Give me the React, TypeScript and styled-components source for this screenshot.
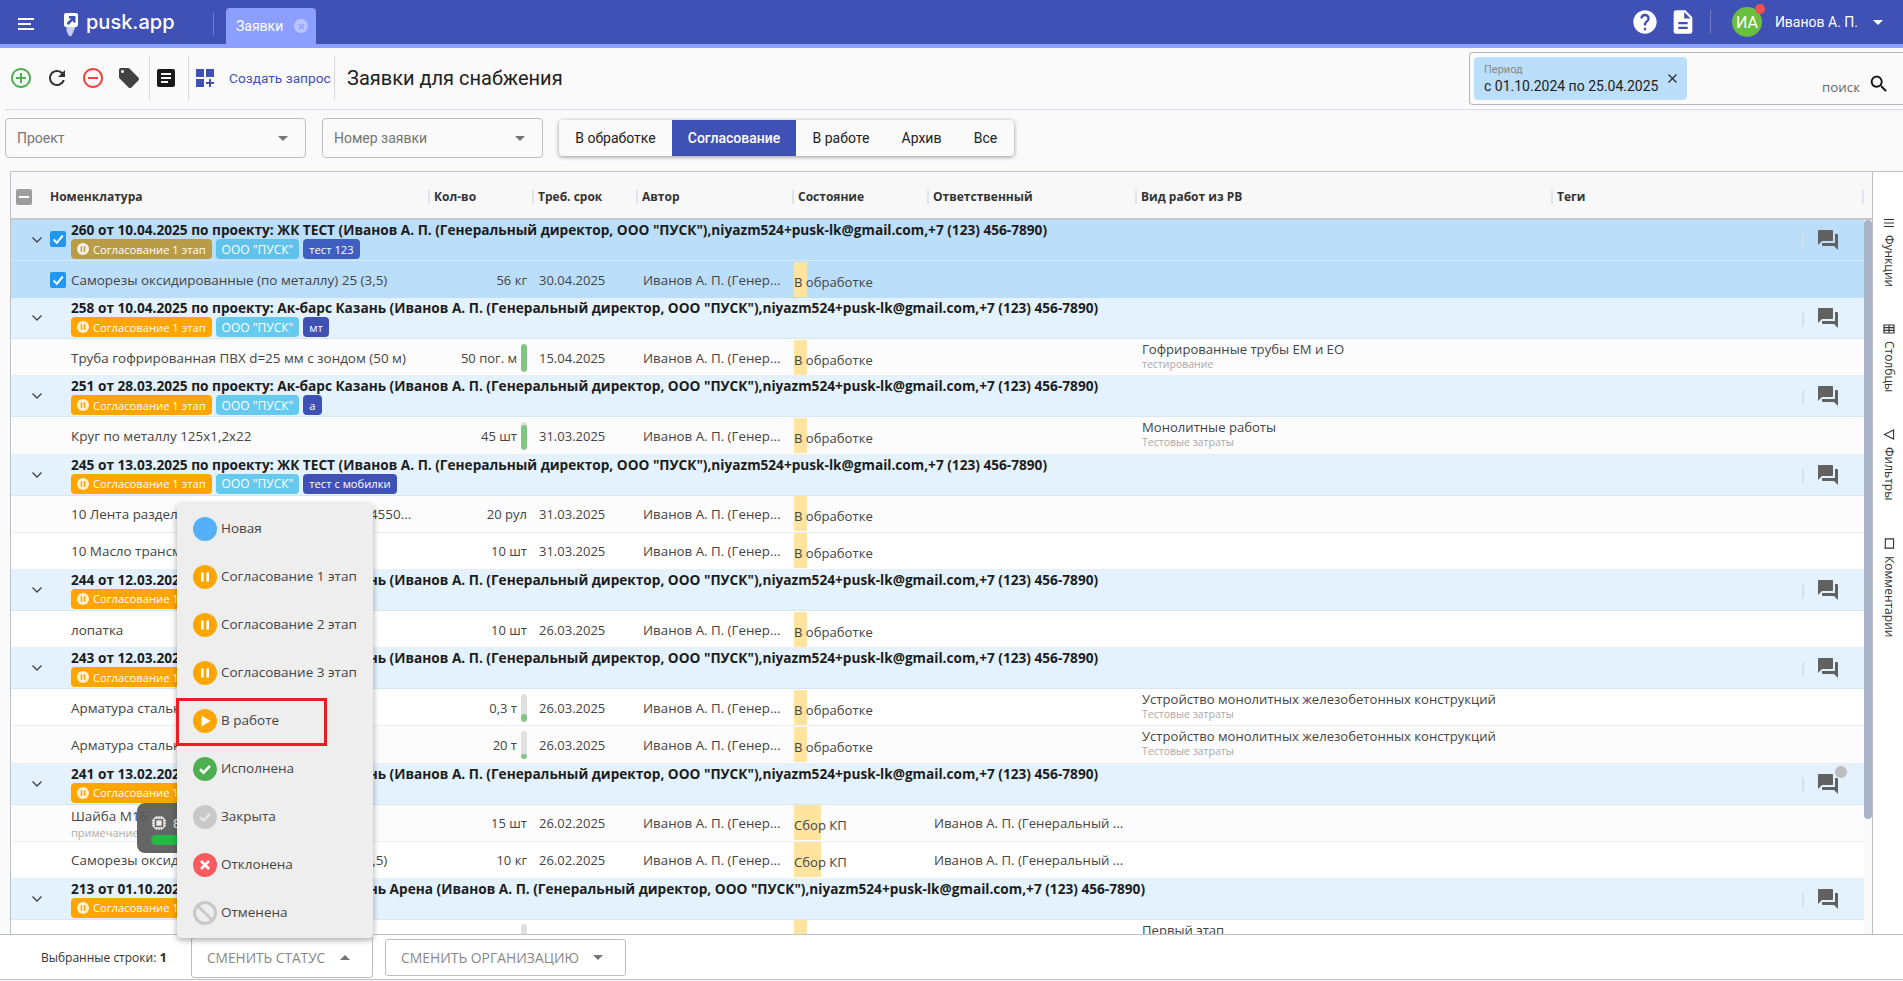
import React from 'react';
import styled, { createGlobalStyle } from 'styled-components';

const GlobalStyle = createGlobalStyle`
   html, body { margin: 0; padding: 0; background: #fafafa; }
   body { font-family: Roboto, 'Liberation Sans', sans-serif; color: #212121; }
   * { box-sizing: border-box; }
`;

const tableFont = `'Open Sans', 'Noto Sans', sans-serif`;

const Page = styled.div`
   position: relative;
   width: 1903px;
   height: 981px;
   overflow: hidden;
   display: flex;
   flex-direction: column;
`;

/* top bar */
const TopBar = styled.header`
   height: 48px;
   flex: none;
   display: flex;
   align-items: flex-start;
   background: #3f51b5;
   border-bottom: 4px solid #8c9eff;
   color: #fff;
`;
const Burger = styled.div`
   width: 16px;
   margin: 18px 30px 0 18px;
   display: flex;
   flex-direction: column;
   gap: 3px;
`;
const BurgerLine = styled.span<{ $short?: boolean }>`
   height: 2px;
   width: ${(p) => (p.$short ? 13 : 16)}px;
   background: #fff;
`;
const Logo = styled.div`
   display: flex;
   align-items: flex-start;
   gap: 8px;
   width: 149px;
   height: 44px;
   padding-top: 13px;
`;
const LogoMark = styled.svg`
   display: block;
   flex: none;
   width: 14px;
   height: 24px;
`;
const LogoText = styled.span`
   margin-top: -1px;
   font-family: Inter, 'Open Sans', sans-serif;
   font-size: 20px;
   font-weight: 500;
   line-height: 20px;
`;
const TopDivider = styled.div`
   width: 1px;
   height: 24px;
   margin-top: 12px;
   background: rgba(255, 255, 255, 0.25);
`;
const UserDivider = styled(TopDivider)`
   margin: 0 0 0 13px;
`;
const Tab = styled.div`
   width: 90px;
   height: 36px;
   margin: 8px 0 0 12px;
   padding-left: 10px;
   display: flex;
   align-items: center;
   gap: 11px;
   background: #8c9eff;
   border-radius: 4px 4px 0 0;
   font-size: 14px;
`;
const TabClose = styled.span`
   width: 14px;
   height: 14px;
   border-radius: 50%;
   background: rgba(255, 255, 255, 0.4);
   display: flex;
   align-items: center;
   justify-content: center;
`;
const TopRight = styled.div`
   margin-left: auto;
   height: 44px;
   display: flex;
   align-items: center;
   padding-right: 20px;
`;
const TopIcon = styled.svg<{ $mr?: number }>`
   display: block;
   width: 28px;
   height: 28px;
   fill: #fff;
   margin-right: ${(p) => p.$mr ?? 0}px;
`;
const Avatar = styled.div`
   position: relative;
   width: 30px;
   height: 30px;
   margin: 0 13px 0 21px;
   border-radius: 50%;
   background: #6abf3f;
   display: flex;
   align-items: center;
   justify-content: center;
   font-size: 16px;
`;
const AvatarDot = styled.span`
   position: absolute;
   right: -3px;
   top: -3px;
   width: 10px;
   height: 10px;
   border-radius: 50%;
   background: #ef5350;
`;
const UserName = styled.span`
   font-size: 14px;
   margin-right: 15px;
`;
const Caret = styled.span<{ $up?: boolean; $color?: string }>`
   width: 0;
   height: 0;
   border-left: 5px solid transparent;
   border-right: 5px solid transparent;
   ${(p) => (p.$up ? 'border-bottom' : 'border-top')}: 5px solid ${(p) => p.$color ?? '#fff'};
`;

/* toolbar */
const Toolbar = styled.div`
   height: 62px;
   flex: none;
   margin-left: 5px;
   padding-bottom: 1px;
   display: flex;
   align-items: center;
   border-bottom: 1px solid #d9dce3;
`;
const ToolIcon = styled.svg<{ $color: string; $ml?: number; $mr?: number; $size?: number }>`
   display: block;
   width: ${(p) => p.$size ?? 24}px;
   height: ${(p) => p.$size ?? 24}px;
   flex: none;
   fill: ${(p) => p.$color};
   margin-left: ${(p) => p.$ml ?? 0}px;
   margin-right: ${(p) => p.$mr ?? 12}px;
`;
const ToolDivider = styled.div`
   width: 1px;
   height: 44px;
   flex: none;
   background: #d8d8d8;
`;
const CreateLink = styled.span`
   margin-left: 15px;
   margin-right: 4px;
   width: 101px;
   font-size: 13.7px;
   color: #3f51b5;
   white-space: nowrap;
`;
const PageTitle = styled.h1`
   margin: 0 0 0 12px;
   font-size: 20px;
   font-weight: 400;
   color: #212121;
   white-space: nowrap;
`;
const SearchBox = styled.div`
   margin-left: auto;
   margin-top: 4px;
   align-self: flex-start;
   width: 434px;
   height: 53px;
   padding: 4px 13px 0 4px;
   display: flex;
   align-items: flex-start;
   border: 1px solid #b5b5b5;
   border-right: 0;
   border-radius: 4px 0 0 4px;
`;
const PeriodChip = styled.div`
   position: relative;
   width: 213px;
   height: 43px;
   padding: 6px 0 0 10px;
   background: #bbdefb;
   border-radius: 4px;
`;
const ChipLabel = styled.div`
   font-size: 11px;
   line-height: 14px;
   color: #888;
`;
const ChipValue = styled.div`
   font-size: 14px;
   line-height: 18px;
   color: #212121;
`;
const ChipClose = styled.svg`
   position: absolute;
   right: 9px;
   top: 16px;
   width: 11px;
   height: 11px;
   stroke: #333;
   stroke-width: 1.4;
`;
const SearchLabel = styled.span`
   margin: 21px 8px 0 auto;
   font-family: ${tableFont};
   font-size: 13.3px;
   color: #666;
`;
const SearchIcon = styled.svg`
   display: block;
   margin-top: 16px;
   width: 22px;
   height: 22px;
   fill: #111;
`;

/* filters */
const FilterBar = styled.div`
   height: 61px;
   flex: none;
   padding: 8px 0 0 5px;
   display: flex;
   align-items: flex-start;
`;
const SelectBox = styled.div<{ $w: number }>`
   width: ${(p) => p.$w}px;
   height: 40px;
   margin-right: 16px;
   padding: 0 17px 0 11px;
   display: flex;
   align-items: center;
   justify-content: space-between;
   border: 1px solid #bdbdbd;
   border-radius: 4px;
   font-size: 14px;
   color: #757575;
`;
const StatusTabs = styled.div`
   margin-top: 2px;
   height: 36px;
   display: flex;
   background: #fafafa;
   border-radius: 4px;
   overflow: hidden;
   box-shadow: 0 1px 4px rgba(0, 0, 0, 0.4);
`;
const StatusTab = styled.div<{ $active?: boolean; $w: number }>`
   width: ${(p) => p.$w}px;
   display: flex;
   align-items: center;
   justify-content: center;
   font-size: 14px;
   font-weight: ${(p) => (p.$active ? 500 : 400)};
   color: ${(p) => (p.$active ? '#fff' : '#212121')};
   background: ${(p) => (p.$active ? '#3f51b5' : 'transparent')};
`;

/* table */
const Frame = styled.div`
   position: relative;
   flex: 1;
   min-height: 0;
   margin-left: 10px;
   display: flex;
   border-top: 1px solid #bdbfc9;
   border-left: 1px solid #bdbfc9;
`;
const GridArea = styled.div`
   width: 1862px;
   flex: none;
   display: flex;
   flex-direction: column;
   min-height: 0;
   border-right: 1px solid #bdbfc9;
`;
const HeadRow = styled.div`
   height: 48px;
   flex: none;
   padding-top: 3px;
   display: flex;
   align-items: center;
   background: #f8f8f8;
   border-bottom: 2px solid #c4c8d2;
`;
const HeadCell = styled.div<{ $w: number }>`
   width: ${(p) => p.$w}px;
   flex: none;
   height: 14px;
   display: flex;
   align-items: center;
   padding-left: 4px;
   font-family: ${tableFont};
   font-size: 12px;
   font-weight: 700;
   color: #333;
   white-space: nowrap;
   border-left: 2px solid #e0e4ec;
`;
const HeadCheckWrap = styled.div`
   width: 417px;
   flex: none;
   display: flex;
   align-items: center;
   gap: 18px;
   padding-left: 5px;
   font-family: ${tableFont};
   font-size: 12px;
   font-weight: 700;
   color: #333;
`;
const HeadCheck = styled.span`
   width: 16px;
   height: 16px;
   display: flex;
   align-items: center;
   justify-content: center;
   background: #9e9e9e;
   border-radius: 2px;
   &::after {
      content: '';
      width: 10px;
      height: 2px;
      background: #fff;
   }
`;
const BodyWrap = styled.div`
   flex: 1;
   min-height: 0;
   display: flex;
   overflow: hidden;
`;
const Rows = styled.div`
   width: 1853px;
   flex: none;
`;
const ScrollTrack = styled.div`
   width: 9px;
   flex: none;
`;
const ScrollThumb = styled.div`
   width: 8px;
   height: 599px;
   background: #a9b4c8;
   border-radius: 4px;
`;
const GroupRowBox = styled.div<{ $sel?: boolean }>`
   height: 41px;
   display: flex;
   background: ${(p) => (p.$sel ? '#bbdefb' : '#e3f2fd')};
   border-bottom: 1px solid ${(p) => (p.$sel ? '#d3e8fa' : '#d7e6f3')};
`;
const Lead = styled.div`
   width: 60px;
   flex: none;
   display: flex;
   align-items: center;
   padding-left: 14px;
`;
const Chevron = styled.svg`
   display: block;
   width: 24px;
   height: 24px;
   flex: none;
   fill: none;
   stroke: #444;
   stroke-width: 1.4;
`;
const CheckBox = styled.span<{ $group?: boolean }>`
   width: 16px;
   height: 16px;
   flex: none;
   display: flex;
   align-items: center;
   justify-content: center;
   background: #2196f3;
   border-radius: 2px;
   margin: ${(p) => (p.$group ? '-2px 0 0 1px' : '0')};
`;
const GroupBody = styled.div`
   flex: 1;
   padding-top: 1px;
   min-width: 0;
`;
const GroupTitle = styled.div`
   height: 18px;
   line-height: 18px;
   font-family: ${tableFont};
   font-size: 13.65px;
   font-weight: 700;
   color: #1c1c1c;
   white-space: nowrap;
`;
const TagRow = styled.div`
   display: flex;
   gap: 4px;
`;
const Tag = styled.span<{ $bg: string; $fs: number }>`
   height: 20px;
   padding: 0 6px;
   display: inline-flex;
   align-items: center;
   gap: 4px;
   background: ${(p) => p.$bg};
   border-radius: 4px;
   font-family: ${tableFont};
   font-size: ${(p) => p.$fs}px;
   color: #fff;
   white-space: nowrap;
`;
const TagDot = styled.span<{ $color: string }>`
   color: ${(p) => p.$color};
`;
const CommentSide = styled.div`
   width: 62px;
   flex: none;
   padding-top: 14px;
   display: flex;
   align-items: flex-start;
   gap: 12px;
`;
const CommentSep = styled.span`
   width: 2px;
   height: 14px;
   background: #d9dfe6;
`;
const CommentIcon = styled.div`
   position: relative;
   margin-top: -6px;
   width: 24px;
   height: 24px;
`;
const CommentBadge = styled.span`
   position: absolute;
   right: -7px;
   top: -6px;
   width: 12px;
   height: 12px;
   border-radius: 50%;
   background: #bdbdbd;
`;
const Row = styled.div<{ $sel?: boolean; $alt?: boolean }>`
   height: 37.2px;
   padding-top: 1px;
   display: flex;
   align-items: center;
   font-family: ${tableFont};
   font-size: 13px;
   color: #444;
   background: ${(p) => (p.$sel ? '#bbdefb' : p.$alt ? '#fcfcfc' : '#fff')};
   border-bottom: 1px solid ${(p) => (p.$sel ? '#bbdefb' : '#eceef4')};
`;
const NameCell = styled.div`
   width: 417px;
   flex: none;
   display: flex;
   align-items: center;
   min-width: 0;
`;
const NameLead = styled.div`
   width: 60px;
   flex: none;
   padding-left: 39px;
`;
const NameText = styled.div`
   min-width: 0;
   font-size: 13.45px;
   white-space: nowrap;
`;
const NameNote = styled.div`
   margin-top: 2px;
   font-size: 11px;
   line-height: 12px;
   color: #aaa;
`;
const QtyCell = styled.div`
   width: 104px;
   flex: none;
   display: flex;
   align-items: center;
   justify-content: flex-end;
   gap: 4px;
   padding-right: 5px;
   white-space: nowrap;
`;
const Bar = styled.span`
   width: 6px;
   height: 28px;
   display: flex;
   align-items: flex-end;
   background: #e0e0e0;
   border-radius: 3px;
   overflow: hidden;
`;
const BarFill = styled.span<{ $h: number }>`
   display: block;
   width: 100%;
   height: ${(p) => p.$h}px;
   background: #81c784;
   border-radius: 3px;
`;
const TextCell = styled.div<{ $w: number; $fs?: number }>`
   width: ${(p) => p.$w}px;
   flex: none;
   padding-left: 7px;
   font-size: ${(p) => p.$fs ?? 13}px;
   white-space: nowrap;
`;
const StateCell = styled.div<{ $strip: number }>`
   width: 133px;
   flex: none;
   margin: -1px 0 0 2px;
   height: 35px;
   padding-top: 11px;
   font-size: 13.1px;
   line-height: 18px;
   color: #444;
   white-space: nowrap;
   background: linear-gradient(#ffe4a0, #ffe4a0) no-repeat left top / ${(p) => p.$strip}px 100%;
`;
const WorkCell = styled.div`
   flex: 1;
   padding: 0 0 0 7px;
   min-width: 0;
   font-size: 13.1px;
   line-height: 15px;
   margin-top: -2px;
`;
const WorkNote = styled.div`
   font-size: 10.5px;
   line-height: 14px;
   color: #aaa;
`;

/* side panel */
const SideBar = styled.div`
   flex: 1;
   background: #fff;
   padding: 46px 0 0 9px;
   display: flex;
   flex-direction: column;
   align-items: flex-start;
   gap: 37px;
`;
const SideTab = styled.div`
   writing-mode: vertical-rl;
   display: flex;
   align-items: center;
   gap: 7px;
   font-family: ${tableFont};
   font-size: 12px;
   line-height: 14px;
   color: #333;
   white-space: nowrap;
`;
const SideIcon = styled.svg<{ $h?: number }>`
   display: block;
   width: 12px;
   height: ${(p) => p.$h ?? 10}px;
   fill: none;
   stroke: #333;
   stroke-width: 1.2;
`;

/* floating perf widget */
const PerfWidget = styled.div`
   position: absolute;
   left: 126px;
   top: 631px;
   width: 100px;
   height: 50px;
   padding: 11px 0 0 14px;
   border-radius: 8px;
   background: rgba(88, 88, 88, 0.92);
   color: #eee;
   font-size: 13px;
`;
const PerfTop = styled.div`
   display: flex;
   align-items: center;
   gap: 6px;
   height: 18px;
`;
const PerfBar = styled.div`
   width: 70px;
   height: 10px;
   margin-top: 3px;
   border-radius: 5px;
   background: #22bb44;
`;

/* bottom bar */
const BottomBar = styled.div`
   height: 46px;
   flex: none;
   margin-bottom: 1px;
   padding-left: 41px;
   display: flex;
   align-items: center;
   background: #fff;
   border-top: 1px solid #bdbfc9;
   border-bottom: 1px solid #bdbfc9;
   font-family: ${tableFont};
   font-size: 12px;
   color: #333;
   position: relative;
   z-index: 3;
`;
const Selected = styled.span`
   width: 150px;
   flex: none;
   b { font-size: 13px; }
`;
const ActionWrap = styled.div`
   position: relative;
   margin-right: 12px;
`;
const ActionButton = styled.div<{ $w: number; $h: number; $fs: number }>`
   width: ${(p) => p.$w}px;
   height: ${(p) => p.$h}px;
   padding: 0 22px 0 15px;
   display: flex;
   align-items: center;
   justify-content: space-between;
   border: 1px solid #bdbdbd;
   border-radius: 3px;
   background: #fff;
   font-family: ${tableFont};
   font-size: ${(p) => p.$fs}px;
   color: #888;
   white-space: nowrap;
`;
const Menu = styled.div`
   position: absolute;
   left: -14px;
   bottom: calc(100% - 1px);
   width: 196px;
   padding: 1px 0;
   background: #eee;
   border-radius: 4px;
   box-shadow: 0 2px 6px rgba(0, 0, 0, 0.35);
`;
const MenuItem = styled.div<{ $marked?: boolean }>`
   position: relative;
   height: 48px;
   padding-left: 16px;
   display: flex;
   align-items: center;
   gap: 4px;
   font-family: ${tableFont};
   font-size: 13.5px;
   color: #444;
   ${(p) =>
      p.$marked &&
      `&::after {
         content: '';
         box-sizing: border-box;
         position: absolute;
         left: -1px;
         top: 1px;
         width: 151px;
         height: 48px;
         border: 3px solid #ed1c24;
      }`}
`;
const MenuLabel = styled.span`
   width: 137px;
   margin-top: -2px;
   overflow: hidden;
   white-space: nowrap;
`;

const Svg = styled.svg<{ $size: number }>`
   display: block;
   flex: none;
   width: ${(p) => p.$size}px;
   height: ${(p) => p.$size}px;
`;

const ArrowDown = () => <Caret $color="#757575" />;

const PauseDot = () => (
   <Svg $size={12} viewBox="0 0 12 12">
      <circle cx="6" cy="6" r="6" fill="#fff" fillOpacity="0.85" />
      <rect x="3.7" y="3.2" width="1.5" height="5.6" fill="currentColor" />
      <rect x="6.8" y="3.2" width="1.5" height="5.6" fill="currentColor" />
   </Svg>
);

const Check = () => (
   <svg width="14" height="14" viewBox="0 0 14 14" fill="none" stroke="#fff" strokeWidth="2">
      <path d="M2.5 7.5 5.8 10.8 11.8 3.5" />
   </svg>
);

const Forum = ({ badge }: { badge?: boolean }) => (
   <CommentIcon>
      <Svg $size={24} viewBox="0 0 24 24" fill="#616161">
         <path d="M21 6h-2v9H6v2c0 .55.45 1 1 1h11l4 4V7c0-.55-.45-1-1-1zm-4 6V3c0-.55-.45-1-1-1H3c-.55 0-1 .45-1 1v14l4-4h10c.55 0 1-.45 1-1z" />
      </Svg>
      {badge && <CommentBadge />}
   </CommentIcon>
);

type TagData = { text: string; color: string; fs?: number };
type GroupData = {
   title: string;
   tags: TagData[];
   selected?: boolean;
   badge?: boolean;
};

const ORANGE = '#ffa500';
const SKY = '#66c9ee';
const INDIGO = '#3f51b5';

const contact =
   ' (Иванов А. П. (Генеральный директор, ООО "ПУСК"),niyazm524+pusk-lk@gmail.com,+7 (123) 456-7890)';

const GroupRow: React.FC<GroupData> = ({ title, tags, selected, badge }) => (
   <GroupRowBox $sel={selected}>
      <Lead>
         <Chevron viewBox="0 0 24 24">
            <path d="M7.5 9.5 12 14l4.5-4.5" />
         </Chevron>
         {selected && (
            <CheckBox $group>
               <Check />
            </CheckBox>
         )}
      </Lead>
      <GroupBody>
         <GroupTitle>{title + contact}</GroupTitle>
         <TagRow>
            {tags.map((t, i) => (
               <Tag
                  key={t.text}
                  $fs={t.fs ?? 11.2}
                  $bg={selected && i === 0 ? '#b99c48' : selected && i === 1 ? '#60c2ea' : t.color}
               >
                  {i === 0 && (
                     <TagDot $color={selected ? '#b99c48' : ORANGE}>
                        <PauseDot />
                     </TagDot>
                  )}
                  {t.text}
               </Tag>
            ))}
         </TagRow>
      </GroupBody>
      <CommentSide>
         <CommentSep />
         <Forum badge={badge} />
      </CommentSide>
   </GroupRowBox>
);

type RowData = {
   name: string;
   note?: string;
   qty: string;
   fill?: number;
   date: string;
   state?: string;
   resp?: string;
   work?: string;
   workNote?: string;
   selected?: boolean;
   alt?: boolean;
};

const DataRow: React.FC<RowData> = ({ name, note, qty, fill, date, state, resp, work, workNote, selected, alt }) => (
   <Row $sel={selected} $alt={alt}>
      <NameCell>
         <NameLead>
            {selected && (
               <CheckBox>
                  <Check />
               </CheckBox>
            )}
         </NameLead>
         <NameText>
            {name}
            {note && <NameNote>{note}</NameNote>}
         </NameText>
      </NameCell>
      <QtyCell>
         {qty}
         {fill !== undefined && (
            <Bar>
               <BarFill $h={fill} />
            </Bar>
         )}
      </QtyCell>
      <TextCell $w={104}>{date}</TextCell>
      <TextCell $w={156} $fs={13.3}>
         {date && 'Иванов А. П. (Генер...'}
      </TextCell>
      <StateCell $strip={state === 'Сбор КП' ? 27 : 13}>{state ?? 'В обработке'}</StateCell>
      <TextCell $w={208} $fs={13.2}>
         {resp}
      </TextCell>
      <WorkCell>
         {work}
         {workNote && <WorkNote>{workNote}</WorkNote>}
      </WorkCell>
   </Row>
);

const statusTag: TagData = { text: 'Согласование 1 этап', color: ORANGE };
const orgTag: TagData = { text: 'ООО "ПУСК"', color: SKY, fs: 12 };

const monolith = 'Устройство монолитных железобетонных конструкций';
const respName = 'Иванов А. П. (Генеральный ...';

const tableRows: ({ group: GroupData } | { row: RowData })[] = [
   { group: { title: '260 от 10.04.2025 по проекту: ЖК ТЕСТ', selected: true, tags: [statusTag, orgTag, { text: 'тест 123', color: '#3f5fbf' }] } },
   { row: { name: 'Саморезы оксидированные (по металлу) 25 (3,5)', qty: '56 кг', date: '30.04.2025', selected: true } },
   { group: { title: '258 от 10.04.2025 по проекту: Ак-барс Казань', tags: [statusTag, orgTag, { text: 'мт', color: INDIGO }] } },
   { row: { name: 'Труба гофрированная ПВХ d=25 мм с зондом (50 м)', qty: '50 пог. м', fill: 28, date: '15.04.2025', work: 'Гофрированные трубы ЕМ и ЕО', workNote: 'тестирование', alt: true } },
   { group: { title: '251 от 28.03.2025 по проекту: Ак-барс Казань', tags: [statusTag, orgTag, { text: 'а', color: INDIGO }] } },
   { row: { name: 'Круг по металлу 125х1,2х22', qty: '45 шт', fill: 25, date: '31.03.2025', work: 'Монолитные работы', workNote: 'Тестовые затраты', alt: true } },
   { group: { title: '245 от 13.03.2025 по проекту: ЖК ТЕСТ', tags: [statusTag, orgTag, { text: 'тест с мобилки', color: INDIGO }] } },
   { row: { name: '10 Лента разделительная полимерная 2 мм 74550...', qty: '20 рул', date: '31.03.2025', alt: true } },
   { row: { name: '10 Масло трансмиссионное', qty: '10 шт', date: '31.03.2025' } },
   { group: { title: '244 от 12.03.2025 по проекту: Ак-барс Казань', tags: [statusTag] } },
   { row: { name: 'лопатка', qty: '10 шт', date: '26.03.2025' } },
   { group: { title: '243 от 12.03.2025 по проекту: Ак-барс Казань', tags: [statusTag] } },
   { row: { name: 'Арматура стальная А500С', qty: '0,3 т', fill: 8, date: '26.03.2025', work: monolith, workNote: 'Тестовые затраты' } },
   { row: { name: 'Арматура стальная А240', qty: '20 т', fill: 5, date: '26.03.2025', work: monolith, workNote: 'Тестовые затраты', alt: true } },
   { group: { title: '241 от 13.02.2025 по проекту: Ак-барс Казань', badge: true, tags: [statusTag] } },
   { row: { name: 'Шайба М16', note: 'примечание', qty: '15 шт', date: '26.02.2025', state: 'Сбор КП', resp: respName, alt: true } },
   { row: { name: 'Саморезы оксидированные (по металлу) 25 (3,5)', qty: '10 кг', date: '26.02.2025', state: 'Сбор КП', resp: respName } },
   { group: { title: '213 от 01.10.2024 по проекту: Ак-барс Казань Арена', tags: [statusTag] } },
   { row: { name: '', qty: '', fill: 4, date: '', work: 'Первый этап', workNote: 'Тестовые затраты' } },
];

const columns: [string, number][] = [
   ['Кол-во', 104],
   ['Треб. срок', 104],
   ['Автор', 156],
   ['Состояние', 135],
   ['Ответственный', 208],
   ['Вид работ из РВ', 416],
   ['Теги', 311],
];

const menuIcon = (bg: string, inner: React.ReactNode) => (
   <Svg $size={24} viewBox="0 0 24 24">
      <circle cx="12" cy="12" r="12" fill={bg} />
      {inner}
   </Svg>
);
const pause = (
   <>
      <rect x="8" y="7.5" width="2.6" height="9" fill="#fff" />
      <rect x="13.4" y="7.5" width="2.6" height="9" fill="#fff" />
   </>
);
const tick = (color: string) => <path d="M7 12.2 10.6 15.6 17 8.8" fill="none" stroke={color} strokeWidth="2.6" />;

const menuItems: { label: string; icon: React.ReactNode; marked?: boolean }[] = [
   { label: 'Новая', icon: menuIcon('#54b0f8', null) },
   { label: 'Согласование 1 этап', icon: menuIcon(ORANGE, pause) },
   { label: 'Согласование 2 этап', icon: menuIcon(ORANGE, pause) },
   { label: 'Согласование 3 этап', icon: menuIcon(ORANGE, pause) },
   { label: 'В работе', marked: true, icon: menuIcon(ORANGE, <path d="M8.5 6.5v11l9-5.5z" fill="#fff" />) },
   { label: 'Исполнена', icon: menuIcon('#4caf50', tick('#fff')) },
   { label: 'Закрыта', icon: menuIcon('#c8c8c8', tick('#e4e4e4')) },
   { label: 'Отклонена', icon: menuIcon('#fc5a5f', <path d="M8 8l8 8M16 8l-8 8" stroke="#fff" strokeWidth="2.6" />) },
   {
      label: 'Отменена',
      icon: (
         <Svg $size={24} viewBox="0 0 24 24" fill="none" stroke="#c8c8c8" strokeWidth="3">
            <circle cx="12" cy="12" r="10.5" />
            <path d="M4.8 4.8 19.2 19.2" />
         </Svg>
      ),
   },
];

const App: React.FC = () => (
   <Page>
      <GlobalStyle />
      <TopBar>
         <Burger>
            <BurgerLine />
            <BurgerLine $short />
            <BurgerLine />
         </Burger>
         <Logo>
            <LogoMark viewBox="0 0 14 24">
               <path d="M2.5 14h9l-3.6 8.2c-.7 1.5-2.4 1.5-3.2.2L2.5 18z" fill="#c5cdf0" />
               <rect width="14" height="14" rx="2" fill="#fff" />
               <path d="M5 3h6.5v6.5H9V7.4L4.4 12 2.6 10.2 7.2 5.5H5z" fill="#3f51b5" />
            </LogoMark>
            <LogoText>pusk.app</LogoText>
         </Logo>
         <TopDivider />
         <Tab>
            Заявки
            <TabClose>
               <svg width="7" height="7" viewBox="0 0 7 7" stroke="#8c9eff" strokeWidth="1.2">
                  <path d="M1 1l5 5M6 1 1 6" />
               </svg>
            </TabClose>
         </Tab>
         <TopRight>
            <TopIcon $mr={10} viewBox="0 0 24 24">
               <path d="M12 2C6.48 2 2 6.48 2 12s4.48 10 10 10 10-4.48 10-10S17.52 2 12 2zm1 17h-2v-2h2v2zm2.07-7.75l-.9.92C13.45 12.9 13 13.5 13 15h-2v-.5c0-1.1.45-2.1 1.17-2.83l1.24-1.26c.37-.36.59-.86.59-1.41 0-1.1-.9-2-2-2s-2 .9-2 2H8c0-2.21 1.79-4 4-4s4 1.79 4 4c0 .88-.36 1.68-.93 2.25z" />
            </TopIcon>
            <TopIcon viewBox="0 0 24 24">
               <path d="M14 2H6c-1.1 0-1.99.9-1.99 2L4 20c0 1.1.89 2 1.99 2H18c1.1 0 2-.9 2-2V8l-6-6zm2 16H8v-2h8v2zm0-4H8v-2h8v2zm-3-5V3.5L18.5 9H13z" />
            </TopIcon>
            <UserDivider />
            <Avatar>
               ИА
               <AvatarDot />
            </Avatar>
            <UserName>Иванов А. П.</UserName>
            <Caret />
         </TopRight>
      </TopBar>

      <Toolbar>
         <ToolIcon $color="#4caf50" $ml={4} viewBox="0 0 24 24">
            <path d="M13 7h-2v4H7v2h4v4h2v-4h4v-2h-4V7zm-1-5C6.48 2 2 6.48 2 12s4.48 10 10 10 10-4.48 10-10S17.52 2 12 2zm0 18c-4.41 0-8-3.59-8-8s3.59-8 8-8 8 3.59 8 8-3.59 8-8 8z" />
         </ToolIcon>
         <ToolIcon $color="#333" viewBox="0 0 24 24">
            <path d="M17.65 6.35C16.2 4.9 14.21 4 12 4c-4.42 0-7.99 3.58-7.99 8s3.57 8 7.99 8c3.73 0 6.84-2.55 7.73-6h-2.08c-.82 2.33-3.04 4-5.65 4-3.31 0-6-2.69-6-6s2.69-6 6-6c1.66 0 3.14.69 4.22 1.78L13 11h7V4l-2.35 2.35z" />
         </ToolIcon>
         <ToolIcon $color="#f44336" viewBox="0 0 24 24">
            <path d="M7 11v2h10v-2H7zm5-9C6.48 2 2 6.48 2 12s4.48 10 10 10 10-4.48 10-10S17.52 2 12 2zm0 18c-4.41 0-8-3.59-8-8s3.59-8 8-8 8 3.59 8 8-3.59 8-8 8z" />
         </ToolIcon>
         <ToolIcon $color="#424242" $mr={8} viewBox="0 0 24 24">
            <path d="M21.41 11.58l-9-9C12.05 2.22 11.55 2 11 2H4c-1.1 0-2 .9-2 2v7c0 .55.22 1.05.59 1.42l9 9c.36.36.86.58 1.41.58.55 0 1.05-.22 1.41-.59l7-7c.37-.36.59-.86.59-1.41 0-.55-.23-1.06-.59-1.42zM5.5 7C4.67 7 4 6.33 4 5.5S4.67 4 5.5 4 7 4.67 7 5.5 6.33 7 5.5 7z" />
         </ToolIcon>
         <ToolDivider />
         <ToolIcon $color="#1a1a1a" $ml={4} $mr={10} viewBox="0 0 24 24">
            <path d="M19 3H5c-1.1 0-2 .9-2 2v14c0 1.1.9 2 2 2h14c1.1 0 2-.9 2-2V5c0-1.1-.9-2-2-2zm-5 14H7v-2h7v2zm3-4H7v-2h10v2zm0-4H7V7h10v2z" />
         </ToolIcon>
         <ToolDivider />
         <ToolIcon $color="#3f51b5" $ml={7} $mr={0} $size={18} viewBox="0 0 18 18">
            <path d="M0 0h8v8H0zM10 0h8v8h-8zM0 10h8v8H0zM13 10h2v3h3v2h-3v3h-2v-3h-3v-2h3z" />
         </ToolIcon>
         <CreateLink>Создать запрос</CreateLink>
         <ToolDivider />
         <PageTitle>Заявки для снабжения</PageTitle>
         <SearchBox>
            <PeriodChip>
               <ChipLabel>Период</ChipLabel>
               <ChipValue>с 01.10.2024 по 25.04.2025</ChipValue>
               <ChipClose viewBox="0 0 11 11">
                  <path d="M1.5 1.5l8 8M9.5 1.5l-8 8" />
               </ChipClose>
            </PeriodChip>
            <SearchLabel>поиск</SearchLabel>
            <SearchIcon viewBox="0 0 24 24">
               <path d="M15.5 14h-.79l-.28-.27C15.41 12.59 16 11.11 16 9.5 16 5.91 13.09 3 9.5 3S3 5.91 3 9.5 5.91 16 9.5 16c1.61 0 3.09-.59 4.23-1.57l.27.28v.79l5 4.99L20.49 19l-4.99-5zm-6 0C7.01 14 5 11.99 5 9.5S7.01 5 9.5 5 14 7.01 14 9.5 11.99 14 9.5 14z" />
            </SearchIcon>
         </SearchBox>
      </Toolbar>

      <FilterBar>
         <SelectBox $w={301}>
            Проект
            <ArrowDown />
         </SelectBox>
         <SelectBox $w={221}>
            Номер заявки
            <ArrowDown />
         </SelectBox>
         <StatusTabs>
            <StatusTab $w={113}>В обработке</StatusTab>
            <StatusTab $w={124} $active>
               Согласование
            </StatusTab>
            <StatusTab $w={90}>В работе</StatusTab>
            <StatusTab $w={71}>Архив</StatusTab>
            <StatusTab $w={57}>Все</StatusTab>
         </StatusTabs>
      </FilterBar>

      <Frame>
         <GridArea>
            <HeadRow>
               <HeadCheckWrap>
                  <HeadCheck />
                  Номенклатура
               </HeadCheckWrap>
               {columns.map(([label, w]) => (
                  <HeadCell key={label} $w={w}>
                     {label}
                  </HeadCell>
               ))}
               <HeadCell $w={2} />
            </HeadRow>
            <BodyWrap>
               <Rows>
                  {tableRows.map((r, i) =>
                     'group' in r ? <GroupRow key={i} {...r.group} /> : <DataRow key={i} {...r.row} />,
                  )}
               </Rows>
               <ScrollTrack>
                  <ScrollThumb />
               </ScrollTrack>
            </BodyWrap>
         </GridArea>
         <SideBar>
            <SideTab>
               <SideIcon viewBox="0 0 12 10">
                  <path d="M1 1.5h10M1 5h10M1 8.5h10" />
               </SideIcon>
               Функции
            </SideTab>
            <SideTab>
               <SideIcon viewBox="0 0 12 10">
                  <path d="M1 1h10v8H1zM1 3.6h10M1 6.3h10M6 1v8" />
               </SideIcon>
               Столбцы
            </SideTab>
            <SideTab>
               <SideIcon $h={11} viewBox="0 0 12 12">
                  <path d="M11 1 1 6l10 5z" />
               </SideIcon>
               Фильтры
            </SideTab>
            <SideTab>
               <SideIcon $h={11} viewBox="0 0 12 12">
                  <path d="M2 1h9v10H2zM1 11h4" />
               </SideIcon>
               Комментарии
            </SideTab>
         </SideBar>
         <PerfWidget>
            <PerfTop>
               <Svg $size={16} viewBox="0 0 16 16" fill="none" stroke="#eee" strokeWidth="1.3">
                  <rect x="3" y="3" width="10" height="10" rx="1.5" />
                  <rect x="6" y="6" width="4" height="4" fill="#eee" />
                  <path d="M5.5 1v2M8 1v2M10.5 1v2M5.5 13v2M8 13v2M10.5 13v2M1 5.5h2M1 8h2M1 10.5h2M13 5.5h2M13 8h2M13 10.5h2" />
               </Svg>
               8
            </PerfTop>
            <PerfBar />
         </PerfWidget>
      </Frame>

      <BottomBar>
         <Selected>
            Выбранные строки: <b>1</b>
         </Selected>
         <ActionWrap>
            <ActionButton $w={182} $h={41} $fs={13.7}>
               СМЕНИТЬ СТАТУС
               <Caret $up $color="#757575" />
            </ActionButton>
            <Menu>
               {menuItems.map((m) => (
                  <MenuItem key={m.label} $marked={m.marked}>
                     {m.icon}
                     <MenuLabel>{m.label}</MenuLabel>
                  </MenuItem>
               ))}
            </Menu>
         </ActionWrap>
         <ActionButton $w={241} $h={37} $fs={13.9}>
            СМЕНИТЬ ОРГАНИЗАЦИЮ
            <Caret $color="#757575" />
         </ActionButton>
      </BottomBar>
   </Page>
);

export default App;
